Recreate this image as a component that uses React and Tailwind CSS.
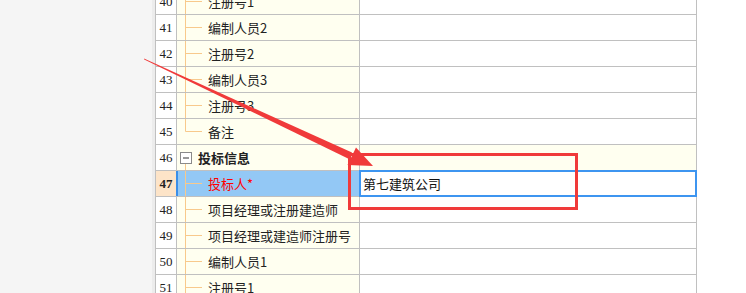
import React from "react";

const rows = [
  { n: 40, label: "注册号1", tree: "mid" },
  { n: 41, label: "编制人员2", tree: "mid" },
  { n: 42, label: "注册号2", tree: "mid" },
  { n: 43, label: "编制人员3", tree: "mid" },
  { n: 44, label: "注册号3", tree: "mid" },
  { n: 45, label: "备注", tree: "last" },
  { n: 46, label: "投标信息", group: true },
  { n: 47, label: "投标人*", tree: "mid", selected: true, value: "第七建筑公司" },
  { n: 48, label: "项目经理或注册建造师", tree: "mid" },
  { n: 49, label: "项目经理或建造师注册号", tree: "mid" },
  { n: 50, label: "编制人员1", tree: "mid" },
  { n: 51, label: "注册号1", tree: "mid" },
];

// tree connector drawn in front of each child label
const TreeLine = ({ last }) => (
  <svg width="31" height="25" className="shrink-0">
    <line x1="8.5" y1="0" x2="8.5" y2={last ? 12.5 : 25} stroke="#f8c98c" strokeWidth="1" />
    <line x1="8.5" y1="12.5" x2="25" y2="12.5" stroke="#f8c98c" strokeWidth="1" />
  </svg>
);

const GroupToggle = () => (
  <svg width="21" height="25" className="shrink-0">
    <rect x="3.5" y="7.5" width="11" height="11" fill="#fff" stroke="#8a8a8a" />
    <line x1="6" y1="13" x2="12" y2="13" stroke="#333" strokeWidth="1" />
    <line x1="8.5" y1="19" x2="8.5" y2="25" stroke="#f8c98c" strokeWidth="1" />
  </svg>
);

const Row = ({ row }) => {
  const font = { fontFamily: '"Liberation Serif", "Noto Sans CJK SC", serif' };
  return (
    <div className="flex h-[26px] border-b border-[#c0c0c0]">
      <div
        className={`w-[21px] shrink-0 border-r flex items-center justify-center text-[13px] ${
          row.selected
            ? "bg-[#fde4c8] font-bold border-[#3b8fe8] text-[#222]"
            : "bg-white border-[#c0c0c0] text-[#222]"
        }`}
        style={font}
      >
        {row.n}
      </div>
      <div
        className={`w-[183px] shrink-0 border-r border-[#c0c0c0] flex items-center overflow-hidden ${
          row.selected ? "bg-[#93c8f5] shadow-[inset_1px_0_0_#3b8fe8]" : "bg-[#fffff0]"
        }`}
      >
        {row.group ? <GroupToggle /> : <TreeLine last={row.tree === "last"} />}
        <span
          className={`whitespace-nowrap text-[13px] leading-none ${
            row.group ? "font-bold text-[#222]" : row.selected ? "text-[#ff0000]" : "text-[#222]"
          }`}
          style={{ fontFamily: '"Noto Sans CJK SC", sans-serif' }}
        >
          {row.label}
        </span>
      </div>
      <div className={`relative flex-1 flex items-center ${row.group ? "bg-[#fffff0]" : "bg-white"}`}>
        {row.selected && (
          <div className="absolute -top-px -left-px -right-px -bottom-px border-2 border-[#3d95f0] flex items-center pl-[2px]">
            <span
              className="text-[13px] leading-none text-[#111]"
              style={{ fontFamily: '"Noto Sans CJK SC", sans-serif' }}
            >
              {row.value}
            </span>
          </div>
        )}
      </div>
    </div>
  );
};

export default function App() {
  return (
    <div className="relative flex h-[293px] w-[746px] overflow-hidden bg-white">
      {/* empty left area */}
      <div className="w-[155px] shrink-0 bg-[#f5f5f5] flex justify-end">
        <div className="w-[3px] bg-[#ececec]" />
      </div>

      {/* property grid */}
      <div className="w-[542px] shrink-0 border-l border-r border-[#c0c0c0] -mt-[11px]">
        {rows.map((row) => (
          <Row key={row.n} row={row} />
        ))}
      </div>

      <div className="flex-1 bg-white" />

      {/* annotation: arrow and box */}
      <svg
        className="absolute inset-0 pointer-events-none"
        width="746"
        height="293"
        viewBox="0 0 746 293"
      >
        <polygon
          points="144,58.6 144.2,59.4 349,159 352,152.6"
          fill="#f03a3a"
        />
        <polygon points="373,166 356,147.5 347.5,165" fill="#f03a3a" />
        <rect
          x="349.5"
          y="154.5"
          width="227"
          height="54"
          fill="none"
          stroke="#f03a3a"
          strokeWidth="3"
        />
      </svg>
    </div>
  );
}
